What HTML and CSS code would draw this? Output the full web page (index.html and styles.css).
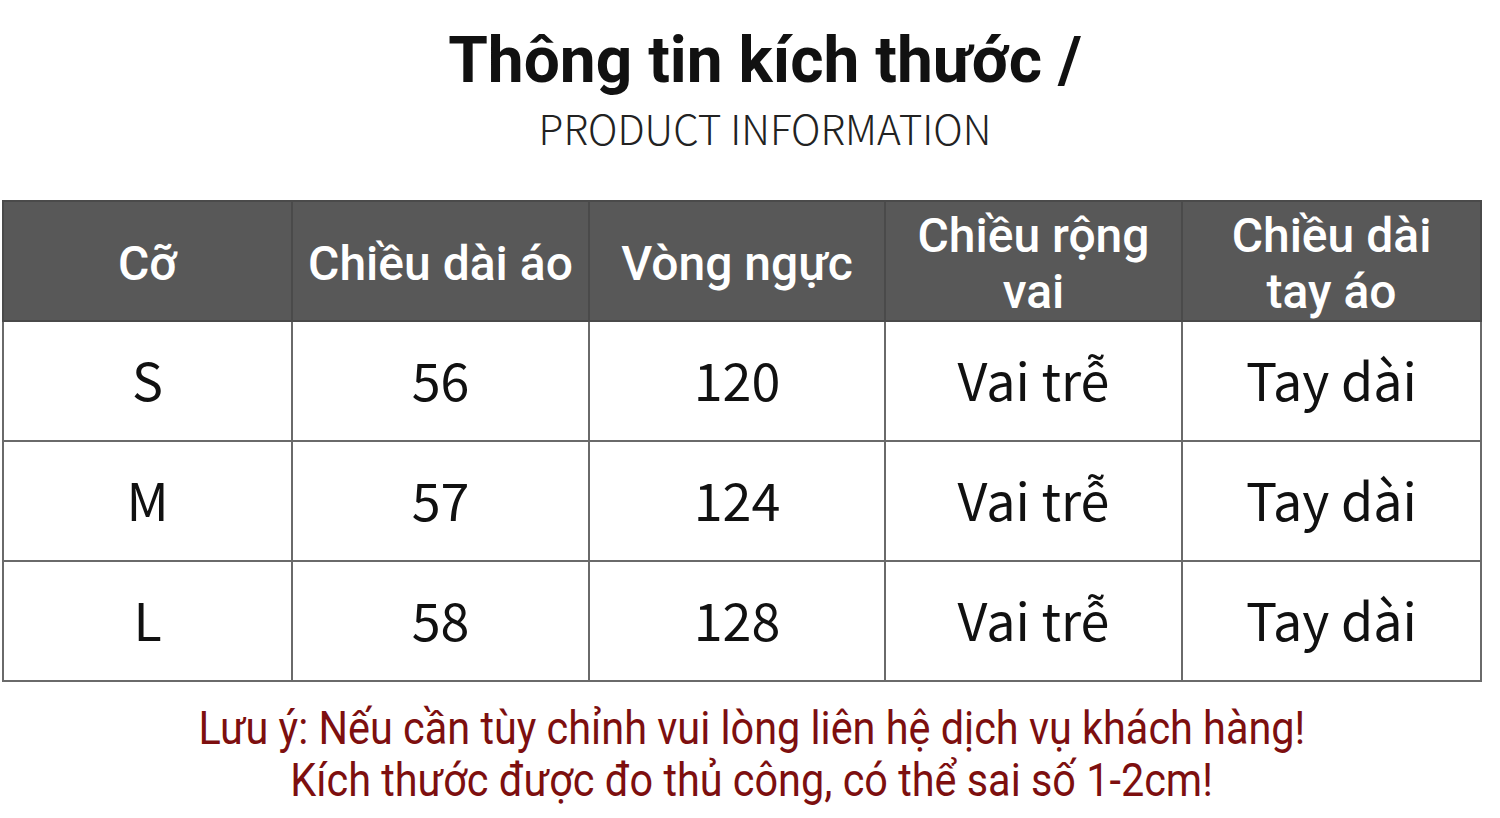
FILE: index.html
```html
<!DOCTYPE html>
<html lang="vi">
<head>
<meta charset="utf-8">
<link rel="stylesheet" href="styles.css">
</head>
<body>
<header class="heading">
  <h1 class="title">Thông tin kích thước /</h1>
  <p class="subtitle">PRODUCT INFORMATION</p>
</header>
<table class="size-table">
  <colgroup>
    <col class="c1"><col class="c2"><col class="c3"><col class="c4"><col class="c5">
  </colgroup>
  <thead>
    <tr>
      <th>Cỡ</th>
      <th>Chiều dài áo</th>
      <th>Vòng ngực</th>
      <th>Chiều rộng<br>vai</th>
      <th>Chiều dài<br>tay áo</th>
    </tr>
  </thead>
  <tbody>
    <tr><td>S</td><td>56</td><td>120</td><td>Vai trễ</td><td>Tay dài</td></tr>
    <tr><td>M</td><td>57</td><td>124</td><td>Vai trễ</td><td>Tay dài</td></tr>
    <tr><td>L</td><td>58</td><td>128</td><td>Vai trễ</td><td>Tay dài</td></tr>
  </tbody>
</table>
<footer class="note">
  <p><span class="squeeze">Lưu ý: Nếu cần tùy chỉnh vui lòng liên hệ dịch vụ khách hàng!</span></p>
  <p><span class="squeeze">Kích thước được đo thủ công, có thể sai số 1-2cm!</span></p>
</footer>
</body>
</html>
```
FILE: styles.css
```css
* { box-sizing: border-box; }
html, body { margin: 0; padding: 0; background: #fff; }
body { width: 1500px; height: 818px; overflow: hidden; font-family: Roboto, "Noto Sans", sans-serif; }

.heading { padding: 28px 0 0 30px; text-align: center; }
.title { margin: 0; font-size: 64px; line-height: 66px; font-weight: 700; color: #111; }
.subtitle { margin: 10px 0 0; font-family: "Noto Sans CJK SC", "Noto Sans", sans-serif; font-weight: 300; font-size: 40.5px; line-height: 48px; color: #222; }

.size-table { margin: 48px 0 0 2px; width: 1478px; border-collapse: collapse; table-layout: fixed; }
.c1 { width: 289px; } .c2 { width: 297px; } .c3 { width: 296px; } .c4 { width: 297px; } .c5 { width: 299px; }
.size-table th, .size-table td { border: 2px solid #4a4a4a; text-align: center; vertical-align: middle; height: 120px; padding: 0; }
.size-table th { background: #585858; color: #fff; font-weight: 500; font-size: 48px; line-height: 56px; padding-top: 6px; }
.size-table td { font-family: "Noto Sans CJK SC", "Noto Sans", sans-serif; font-size: 52px; color: #111; border-color: #6a6a6a; padding-bottom: 6px; }

.note { text-align: center; padding: 20px 0 0 3px; color: #7d0f0f; font-size: 46px; line-height: 52px; }
.note p { margin: 0; }
.squeeze { display: inline-block; transform: scaleX(0.9); transform-origin: center; }
```
